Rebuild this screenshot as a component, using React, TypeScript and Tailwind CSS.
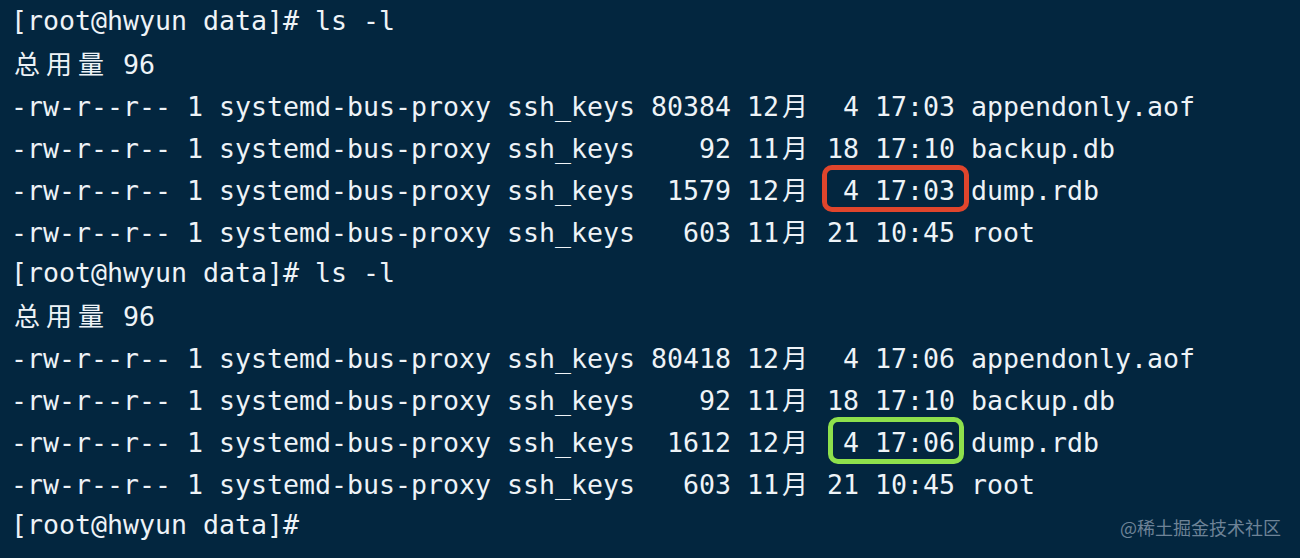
const LINES = [
  "[root@hwyun data]# ls -l",
  "总用量 96",
  "-rw-r--r-- 1 systemd-bus-proxy ssh_keys 80384 12月  4 17:03 appendonly.aof",
  "-rw-r--r-- 1 systemd-bus-proxy ssh_keys    92 11月 18 17:10 backup.db",
  "-rw-r--r-- 1 systemd-bus-proxy ssh_keys  1579 12月  4 17:03 dump.rdb",
  "-rw-r--r-- 1 systemd-bus-proxy ssh_keys   603 11月 21 10:45 root",
  "[root@hwyun data]# ls -l",
  "总用量 96",
  "-rw-r--r-- 1 systemd-bus-proxy ssh_keys 80418 12月  4 17:06 appendonly.aof",
  "-rw-r--r-- 1 systemd-bus-proxy ssh_keys    92 11月 18 17:10 backup.db",
  "-rw-r--r-- 1 systemd-bus-proxy ssh_keys  1612 12月  4 17:06 dump.rdb",
  "-rw-r--r-- 1 systemd-bus-proxy ssh_keys   603 11月 21 10:45 root",
  "[root@hwyun data]#",
];

const isWide = (ch: string) => /[\u3000-\u9fff\uff00-\uffef]/.test(ch);

// CJK chars take two terminal cells (2 x 16px)
function TermLine({ text }: { text: string }) {
  const parts: React.ReactNode[] = [];
  let buf = "";
  Array.from(text).forEach((ch, i) => {
    if (isWide(ch)) {
      if (buf) parts.push(buf);
      buf = "";
      parts.push(
        <span
          key={i}
          className="inline-block w-[32px] text-center font-['Noto_Sans_CJK_SC',sans-serif] text-[26px]"
        >
          {ch}
        </span>
      );
    } else {
      buf += ch;
    }
  });
  if (buf) parts.push(buf);
  return <div className="h-[42px] whitespace-pre">{parts}</div>;
}

export default function App() {
  return (
    <div className="relative h-[558px] w-[1300px] overflow-hidden bg-[#03263f] text-[#eef3f7]">
      <div className="pl-[11px] font-['DejaVu_Sans_Mono',monospace] text-[26.58px] leading-[42px]">
        {LINES.map((line, i) => (
          <TermLine key={i} text={line} />
        ))}
      </div>

      <div className="absolute left-[822px] top-[165px] h-[47px] w-[147px] rounded-[10px] border-[5px] border-[#e0452c]" />
      <div className="absolute left-[828px] top-[417px] h-[47px] w-[136px] rounded-[10px] border-[5px] border-[#8ee04c]" />

      <div className="absolute bottom-[17px] right-[19px] font-['Noto_Sans_CJK_SC',sans-serif] text-[18px] text-[#6e8397]">
        @稀土掘金技术社区
      </div>
    </div>
  );
}
